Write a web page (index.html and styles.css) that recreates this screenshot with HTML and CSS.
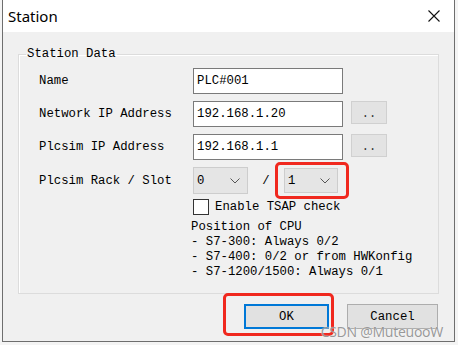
FILE: index.html
```html
<!DOCTYPE html>
<html lang="en">
<head>
  <meta charset="UTF-8" />
  <meta name="viewport" content="width=device-width, initial-scale=1" />
  <title>Station</title>
  <link rel="stylesheet" href="styles.css">
</head>
<body>
  <div class="dialog">
    <div class="titlebar">
      <span class="title">Station</span>
      <svg class="close" width="12" height="12" viewBox="0 0 12 12">
        <path d="M0.5 0.5 L11.5 11.5 M11.5 0.5 L0.5 11.5" stroke="#111" stroke-width="1.1" fill="none" />
      </svg>
    </div>

    <div class="content">
      <fieldset class="group">
        <legend>Station Data</legend>

        <div class="form">
          <label class="row-name">Name</label>
          <div class="row-name"><input class="text" type="text" value="PLC#001" /></div>

          <label class="row-ip">Network IP Address</label>
          <div class="row-ip field">
            <input class="text" type="text" value="192.168.1.20" />
            <button class="dots">..</button>
          </div>

          <label class="row-ip">Plcsim IP Address</label>
          <div class="row-ip field">
            <input class="text" type="text" value="192.168.1.1" />
            <button class="dots">..</button>
          </div>

          <label class="row-rack">Plcsim Rack / Slot</label>
          <div class="row-rack rack">
            <div class="combo combo-rack">
              <span>0</span>
              <svg width="10" height="6" viewBox="0 0 10 6"><path d="M0.5 0.5 L5 5 L9.5 0.5" stroke="#555" stroke-width="1" fill="none" /></svg>
            </div>
            <span class="slash">/</span>
            <div class="marked marked-slot">
              <div class="combo combo-slot">
                <span>1</span>
                <svg width="10" height="6" viewBox="0 0 10 6"><path d="M0.5 0.5 L5 5 L9.5 0.5" stroke="#555" stroke-width="1" fill="none" /></svg>
              </div>
            </div>
          </div>

          <div class="row-check"></div>
          <div class="row-check check">
            <span class="box"></span>
            <span>Enable TSAP check</span>
          </div>

          <div class="row-info"></div>
          <div class="row-info info">Position of CPU
- S7-300: Always 0/2
- S7-400: 0/2 or from HWKonfig
- S7-1200/1500: Always 0/1</div>
        </div>
      </fieldset>

      <div class="actions">
        <div class="marked marked-ok">
          <button class="btn btn-ok">OK</button>
        </div>
        <button class="btn">Cancel</button>
      </div>
    </div>

    <div class="watermark">CSDN @MuteuooW</div>
  </div>
</body>
</html>
```

FILE: styles.css
```css
body {
  margin: 0;
  background: #f4f4f4;
  font-family: "Liberation Mono", "DejaVu Sans Mono", monospace;
  font-size: 12.3px;
  color: #000;
}

.dialog {
  position: relative;
  margin-left: 2px;
  width: 451px;
  border: 1px solid #6e6e6e;
  border-top: none;
  background: #f0f0f0;
}

/* title bar */
.titlebar {
  height: 32px;
  background: #fff;
  display: flex;
  align-items: center;
  justify-content: space-between;
  padding: 0 14px 0 5px;
}

.title {
  font-family: "Noto Sans", "Open Sans", sans-serif;
  font-size: 15px;
  color: #000;
  margin-top: -1px;
}

/* body */
.content {
  padding: 14px 0 12px 0;
}

.group {
  margin: 0 15px;
  padding: 0;
  border: 1px solid #dcdcdc;
  box-shadow: inset 1px 1px 0 #fff;
}

.group legend {
  margin-left: 7px;
  padding: 0 1px;
  line-height: 16px;
}

.form {
  display: grid;
  grid-template-columns: 154px auto;
  align-items: center;
  padding: 6px 0 13px 20px;
}

.form label {
  white-space: nowrap;
}

.row-name { height: 26px; display: flex; align-items: center; }
.row-ip { height: 26px; margin-top: 7px; display: flex; align-items: center; }
.row-rack { height: 27px; margin-top: 7px; display: flex; align-items: center; }
.row-check { height: 16px; margin-top: 5px; }
.row-info { margin-top: 5px; align-self: start; }

.text {
  box-sizing: border-box;
  width: 150px;
  height: 26px;
  border: 1px solid #7a7a7a;
  background: #fff;
  padding: 0 3px;
  font-family: inherit;
  font-size: 12.3px;
  color: #000;
  outline: none;
}

.field {
  gap: 8px;
}

.dots {
  box-sizing: border-box;
  width: 36px;
  height: 23px;
  margin-top: -3px;
  border: 1px solid #d0d0d0;
  background: #e3e3e3;
  font-family: inherit;
  font-size: 12px;
  padding: 3px 0 0 0;
  color: #333;
}

/* rack / slot */
.combo {
  box-sizing: border-box;
  display: flex;
  align-items: center;
  justify-content: space-between;
  background: #e5e5e5;
  border: 1px solid #cdcdcd;
  padding: 0 7px 0 3px;
}

.combo svg {
  margin-top: 1px;
}

.combo-rack {
  width: 55px;
  height: 27px;
}

.combo-slot {
  width: 54px;
  height: 25px;
}

.slash {
  width: 36px;
  text-align: center;
}

.marked {
  position: relative;
}

.marked::after {
  content: "";
  position: absolute;
  border: 3px solid #f0281e;
  border-radius: 5px;
}

.marked-slot::after {
  left: -9px;
  top: -6px;
  right: -11px;
  bottom: -6px;
}

.marked-ok::after {
  left: -21px;
  top: -11px;
  right: -5px;
  bottom: -7px;
}

/* checkbox */
.check {
  display: flex;
  align-items: center;
  gap: 6px;
}

.box {
  box-sizing: border-box;
  width: 16px;
  height: 16px;
  border: 1px solid #333;
  background: #fff;
}

.info {
  white-space: pre;
  line-height: 15px;
  margin-left: -2px;
}

/* buttons */
.actions {
  display: flex;
  justify-content: flex-end;
  gap: 18px;
  padding: 10px 16px 0 0;
}

.btn {
  box-sizing: border-box;
  width: 91px;
  height: 25px;
  border: 1px solid #adadad;
  background: #e1e1e1;
  font-family: inherit;
  font-size: 12.3px;
  color: #000;
  padding: 0;
}

.btn-ok {
  width: 85px;
  border: 1px solid #0078d7;
  box-shadow: inset 0 0 0 1px #0078d7;
}

.watermark {
  position: absolute;
  right: 11px;
  bottom: 4px;
  font-family: "Noto Sans", "Open Sans", sans-serif;
  font-size: 14px;
  line-height: 11px;
  color: rgba(120, 120, 120, 0.75);
  text-shadow: 0 0 1px #fff;
  letter-spacing: -0.3px;
}
```
